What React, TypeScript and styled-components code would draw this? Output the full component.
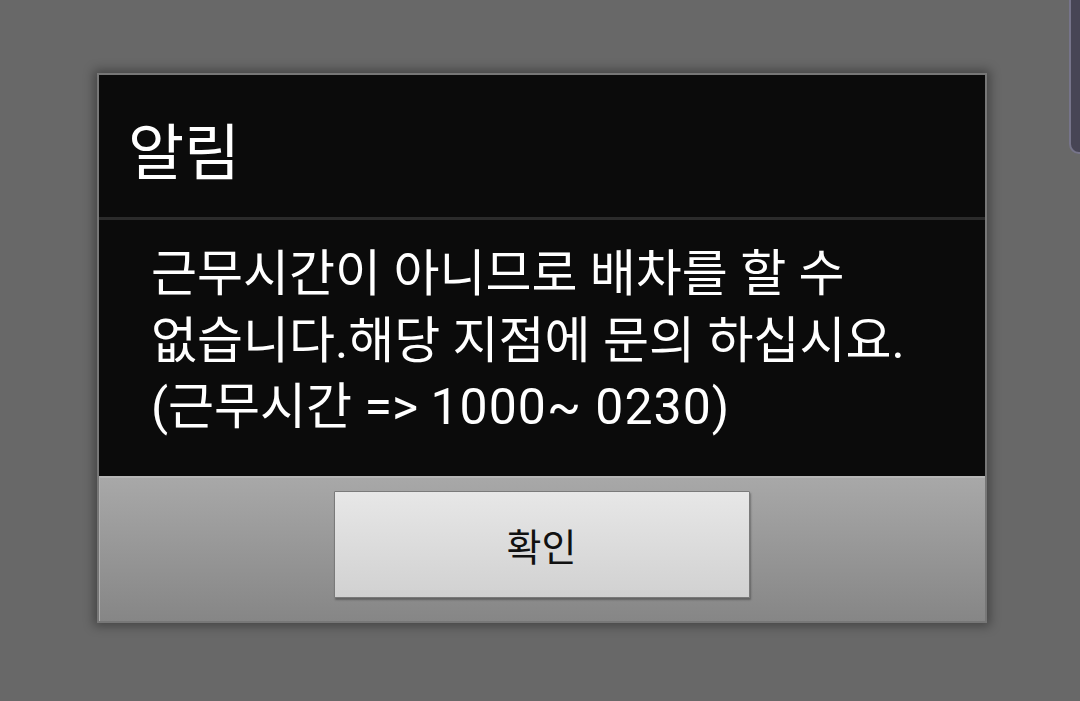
import React from "react";
import styled, { createGlobalStyle } from "styled-components";

const GlobalStyle = createGlobalStyle`
  html, body {
    margin: 0;
    padding: 0;
    background: #686868;
  }
  body {
    font-family: Roboto, "Noto Sans CJK KR", "Noto Sans", sans-serif;
  }
`;

const Screen = styled.div`
  position: relative;
  width: 1080px;
  height: 701px;
  overflow: hidden;
  background: #686868;
  padding: 73px 0 0 97px;
  box-sizing: border-box;
`;

const EdgeTab = styled.div`
  position: absolute;
  top: 0;
  right: 0;
  width: 9px;
  height: 152px;
  background: #474555;
  border-left: 2px solid #76748a;
  border-bottom: 2px solid #76748a;
  border-bottom-left-radius: 10px;
`;

const Dialog = styled.div`
  width: 886px;
  display: flex;
  flex-direction: column;
  border: 2px solid #777777;
  background: #0b0b0b;
  box-shadow: 0 0 10px 3px rgba(0, 0, 0, 0.35);
`;

const TitleBar = styled.div`
  height: 145px;
  display: flex;
  align-items: center;
  padding-left: 29px;
  border-bottom: 3px solid #2b2b2b;
  box-sizing: border-box;
`;

const Title = styled.h1`
  margin: 0;
  color: #ffffff;
  font-size: 61px;
  font-weight: 400;
  line-height: 1;
  padding-top: 16px;
`;

const Body = styled.div`
  height: 256px;
  box-sizing: border-box;
  padding: 21px 0 0 52px;
`;

const Message = styled.p`
  margin: 0;
  color: #ffffff;
  font-size: 50px;
  line-height: 66.5px;
  font-weight: 400;
  white-space: nowrap;
`;

const Digits = styled.span`
  letter-spacing: 1px;
`;

const ButtonBar = styled.div`
  height: 145px;
  box-sizing: border-box;
  display: flex;
  justify-content: center;
  align-items: flex-start;
  padding-top: 13px;
  background: linear-gradient(#a8a8a8, #868686);
  border-top: 2px solid #b6b6b6;
  border-left: 1px solid #b0b0b0;
`;

const OkButton = styled.button`
  width: 416px;
  height: 107px;
  margin-left: -2px;
  border: 1px solid #7a7a7a;
  border-radius: 1px;
  background: linear-gradient(#e7e7e7, #d1d1d1);
  box-shadow: 1px 2px 2px rgba(0, 0, 0, 0.3);
  color: #111111;
  font-family: Roboto, "Noto Sans CJK KR", sans-serif;
  font-size: 38px;
  font-weight: 400;
  padding: 0;
  cursor: pointer;
`;

export default function App() {
  return (
    <>
      <GlobalStyle />
      <Screen>
        <Dialog>
          <TitleBar>
            <Title>알림</Title>
          </TitleBar>
          <Body>
            <Message>
              근무시간이 아니므로 배차를 할 수
              <br />
              없습니다.해당 지점에 문의 하십시요.
              <br />
              (근무시간 =&gt; <Digits>1000~ 0230)</Digits>
            </Message>
          </Body>
          <ButtonBar>
            <OkButton>확인</OkButton>
          </ButtonBar>
        </Dialog>
        <EdgeTab />
      </Screen>
    </>
  );
}
